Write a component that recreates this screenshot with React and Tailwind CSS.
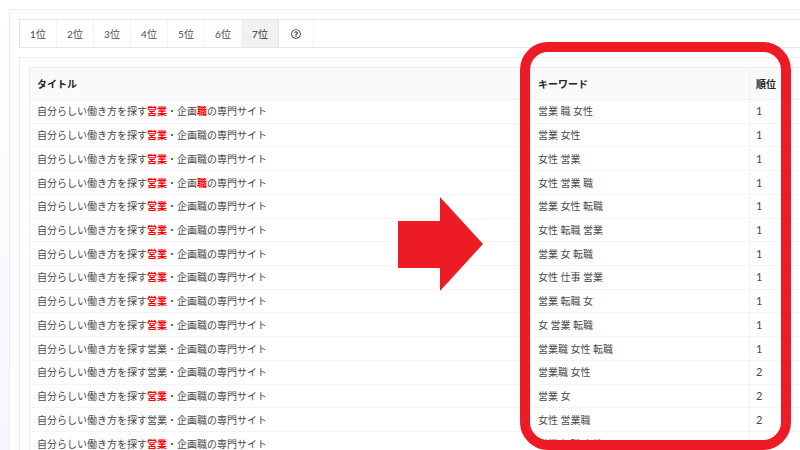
import { FaRegQuestionCircle } from "react-icons/fa";

const tabs = ["1位", "2位", "3位", "4位", "5位", "6位", "7位"];

// marks: which words of the title are highlighted for the row
const rows = [
  { keyword: "営業 職 女性", rank: 1, marks: ["営業", "職"] },
  { keyword: "営業 女性", rank: 1, marks: ["営業"] },
  { keyword: "女性 営業", rank: 1, marks: ["営業"] },
  { keyword: "女性 営業 職", rank: 1, marks: ["営業", "職"] },
  { keyword: "営業 女性 転職", rank: 1, marks: ["営業"] },
  { keyword: "女性 転職 営業", rank: 1, marks: ["営業"] },
  { keyword: "営業 女 転職", rank: 1, marks: ["営業"] },
  { keyword: "女性 仕事 営業", rank: 1, marks: ["営業"] },
  { keyword: "営業 転職 女", rank: 1, marks: ["営業"] },
  { keyword: "女 営業 転職", rank: 1, marks: ["営業"] },
  { keyword: "営業職 女性 転職", rank: 1, marks: [] },
  { keyword: "営業職 女性", rank: 2, marks: [] },
  { keyword: "営業 女", rank: 2, marks: ["営業"] },
  { keyword: "女性 営業職", rank: 2, marks: [] },
  { keyword: "営業 転職 女性", rank: 2, marks: ["営業"] },
];

const titleParts = ["自分らしい働き方を探す", "営業", "・企画", "職", "の専門サイト"];

function Title({ marks }) {
  return titleParts.map((part) =>
    marks.includes(part) ? (
      <b key={part} className="font-bold text-[#ff0000]">{part}</b>
    ) : (
      part
    )
  );
}

export default function App() {
  return (
    <div className="relative h-screen overflow-hidden bg-linear-to-b from-white to-[#f6f7fd] pt-[9px] pl-[9px] font-[Lato,'Noto_Sans_CJK_JP',sans-serif] text-[10px] leading-4 text-[#4a4a4a]">
      <main className="min-h-full rounded-tl-xs border-t border-l border-[#ececee] bg-white pt-[9px] pl-[9px]">
        <nav className="flex h-[29px] border border-r-0 border-[#e6e7e8]">
          {tabs.map((tab) => (
            <button
              key={tab}
              type="button"
              className={
                tab === "7位"
                  ? "w-[37px] border-r border-[#e4e4e5] bg-[#f1f1f1] text-[#333]"
                  : "w-[37px] border-r border-[#f3f3f3]"
              }
            >
              {tab}
            </button>
          ))}
          <button type="button" aria-label="ヘルプ" className="flex w-[35px] items-center justify-center border-r border-[#f3f3f3]">
            <FaRegQuestionCircle className="size-[10px]" />
          </button>
        </nav>

        <section className="mt-[9px] border-t border-l border-[#ececee] pt-[9px] pl-[9px]">
          <table className="h-[389px] w-full table-fixed border-separate border-spacing-0 border-t border-l border-[#ececee] text-left">
            <colgroup>
              <col />
              <col className="w-[219px]" />
              <col className="w-[51px]" />
            </colgroup>
            <thead>
              <tr className="h-8 bg-[#f9fafb] text-[#222]">
                <th className="border-b border-[#f0f1f2] px-[7px] font-bold">タイトル</th>
                <th className="border-b border-l border-[#f0f1f2] px-[7px] font-bold">キーワード</th>
                <th className="border-b border-l border-[#f0f1f2] px-[6px] font-bold">順位</th>
              </tr>
            </thead>
            <tbody>
              {rows.map((row) => (
                <tr key={row.keyword}>
                  <td className="border-b border-[#f4f4f5] px-[7px]"><Title marks={row.marks} /></td>
                  <td className="border-b border-l border-[#f4f4f5] px-[7px]">{row.keyword}</td>
                  <td className="border-b border-l border-[#f4f4f5] px-[6px] text-[11px]">{row.rank}</td>
                </tr>
              ))}
            </tbody>
          </table>
        </section>
      </main>

      <div className="pointer-events-none absolute top-[42px] right-[9px] h-[408px] w-[271px] rounded-[28px] border-10 border-[#ed1c24]" />
      <svg className="pointer-events-none absolute top-[197px] right-[317px] h-[94px] w-[85px]" viewBox="0 0 85 94" aria-hidden="true">
        <path d="M0 24H42V0L85 47L42 94V71H0Z" fill="#ed1c24" />
      </svg>
    </div>
  );
}
